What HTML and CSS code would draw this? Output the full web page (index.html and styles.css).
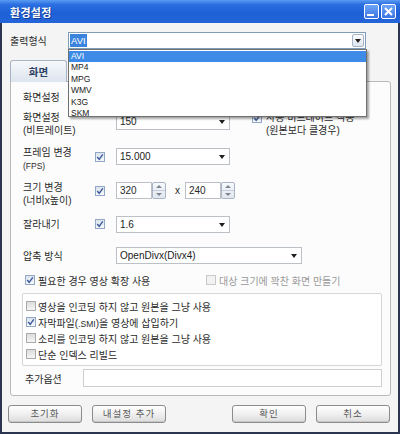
FILE: index.html
```html
<!DOCTYPE html>
<html lang="ko">
<head>
  <meta charset="UTF-8">
  <title>환경설정</title>
  <link rel="stylesheet" href="styles.css">
</head>
<body>
  <div class="window">
    <div class="titlebar">
      <span class="title">환경설정</span>
      <div class="title-buttons">
        <span class="tbtn"><i class="min-bar"></i></span>
        <span class="tbtn">
          <svg width="9" height="9" viewBox="0 0 9 9"><path d="M1 1 L8 8 M8 1 L1 8" stroke="#fff" stroke-width="2"/></svg>
        </span>
      </div>
    </div>

    <div class="body">
      <div class="format-row">
        <span class="format-label">출력형식</span>
        <div class="combo">
          <span class="combo-sel">AVI</span>
          <span class="combo-btn"><i class="arrow"></i></span>
        </div>
      </div>

      <div class="tabs">
        <div class="tab">화면</div>
      </div>

      <div class="panel">
        <div class="section-title">화면설정</div>

        <div class="row r-bitrate">
          <div class="label two">화면설정<br>(비트레이트)</div>
          <div class="check-col"></div>
          <div class="select w114 mt2">150<i class="arrow"></i></div>
          <div class="opt-bitrate">
            <span class="cb on"><svg width="8" height="8" viewBox="0 0 8 8"><path d="M1.2 4 L3.2 6.3 L6.8 1.4" stroke="#3b5a9a" stroke-width="1.4" fill="none"/></svg></span>
            <span class="two">사용 비트레이트 적용<br>(원본보다 클경우)</span>
          </div>
        </div>

        <div class="row r-fps">
          <div class="label two">프레임 변경<br><small>(FPS)</small></div>
          <div class="check-col"><span class="cb on mt6"><svg width="8" height="8" viewBox="0 0 8 8"><path d="M1.2 4 L3.2 6.3 L6.8 1.4" stroke="#3b5a9a" stroke-width="1.4" fill="none"/></svg></span></div>
          <div class="select w114 mt2">15.000<i class="arrow"></i></div>
        </div>

        <div class="row r-size">
          <div class="label two">크기 변경<br>(너비x높이)</div>
          <div class="check-col"><span class="cb on mt5"><svg width="8" height="8" viewBox="0 0 8 8"><path d="M1.2 4 L3.2 6.3 L6.8 1.4" stroke="#3b5a9a" stroke-width="1.4" fill="none"/></svg></span></div>
          <div class="spin-field mt1">
            <div class="input">320</div>
            <div class="spinner"><span><i class="up"></i></span><span><i class="down"></i></span></div>
          </div>
          <span class="times">x</span>
          <div class="spin-field mt1">
            <div class="input">240</div>
            <div class="spinner"><span><i class="up"></i></span><span><i class="down"></i></span></div>
          </div>
        </div>

        <div class="row r-crop">
          <div class="label one">잘라내기</div>
          <div class="check-col"><span class="cb on mt3"><svg width="8" height="8" viewBox="0 0 8 8"><path d="M1.2 4 L3.2 6.3 L6.8 1.4" stroke="#3b5a9a" stroke-width="1.4" fill="none"/></svg></span></div>
          <div class="select w114">1.6<i class="arrow"></i></div>
        </div>

        <div class="row r-codec">
          <div class="label one mt1">압축 방식</div>
          <div class="check-col"></div>
          <div class="select w186">OpenDivx(Divx4)<i class="arrow"></i></div>
        </div>

        <div class="row r-expand">
          <div class="chk-item first">
            <span class="cb on"><svg width="8" height="8" viewBox="0 0 8 8"><path d="M1.2 4 L3.2 6.3 L6.8 1.4" stroke="#3b5a9a" stroke-width="1.4" fill="none"/></svg></span>
            <span>필요한 경우 영상 확장 사용</span>
          </div>
          <div class="chk-item disabled">
            <span class="cb dis"></span>
            <span>대상 크기에 꽉찬 화면 만들기</span>
          </div>
        </div>

        <div class="group">
          <div class="g-row"><span class="cb off"></span><span>영상을 인코딩 하지 않고 원본을 그냥 사용</span></div>
          <div class="g-row"><span class="cb on"><svg width="8" height="8" viewBox="0 0 8 8"><path d="M1.2 4 L3.2 6.3 L6.8 1.4" stroke="#3b5a9a" stroke-width="1.4" fill="none"/></svg></span><span>자막파일(<small>.SMI</small>)을 영상에 삽입하기</span></div>
          <div class="g-row"><span class="cb off"></span><span>소리를 인코딩 하지 않고 원본을 그냥 사용</span></div>
          <div class="g-row"><span class="cb off"></span><span>단순 인덱스 리빌드</span></div>
        </div>

        <div class="row r-extra">
          <div class="extra-label">추가옵션</div>
          <div class="extra-input"></div>
        </div>
      </div>

      <div class="buttons">
        <div class="btn-group">
          <div class="btn">초기화</div>
          <div class="btn">내설정 추가</div>
        </div>
        <div class="btn-group">
          <div class="btn">확인</div>
          <div class="btn">취소</div>
        </div>
      </div>
    </div>

    <ul class="droplist">
      <li class="active">AVI</li>
      <li>MP4</li>
      <li>MPG</li>
      <li>WMV</li>
      <li>K3G</li>
      <li>SKM</li>
    </ul>
  </div>
</body>
</html>
```

FILE: styles.css
```css
/* Base */
* {
  margin: 0;
  padding: 0;
  box-sizing: border-box;
}

body {
  width: 400px;
  height: 434px;
  overflow: hidden;
  background: #fff;
  font-family: "Liberation Sans", "Noto Sans CJK KR", sans-serif;
  font-size: 10px;
  color: #2a2a2a;
}

.window {
  position: relative;
  width: 400px;
  height: 434px;
  display: flex;
  flex-direction: column;
}

/* Title bar */
.titlebar {
  height: 23px;
  display: flex;
  align-items: center;
  justify-content: space-between;
  padding: 0 4px 0 10px;
  background: linear-gradient(#5a9bf2, #2a6ee0 20%, #1d5fd6 60%, #2466d8);
}

.title {
  color: #fff;
  font-weight: bold;
  font-size: 11px;
  letter-spacing: 0.3px;
  text-shadow: 1px 1px 0 rgba(0, 0, 40, 0.4);
}

.title-buttons {
  display: flex;
  gap: 2px;
}

.tbtn {
  width: 15px;
  height: 15px;
  border: 1px solid #fff;
  border-radius: 2px;
  background: linear-gradient(#6fa4f6, #3a76e4);
  display: flex;
  align-items: center;
  justify-content: center;
}

.min-bar {
  display: block;
  width: 7px;
  height: 2px;
  background: #fff;
  margin-top: 6px;
  margin-right: 2px;
}

/* Dialog body */
.body {
  flex: 1;
  border: 2px solid #2b3550;
  border-top: none;
  background: #f4f4f4;
}

.format-row {
  display: flex;
  align-items: center;
  margin-top: 9px;
  padding-left: 8px;
}

.format-label {
  width: 58px;
  font-size: 10px;
}

.combo {
  width: 298px;
  height: 17px;
  border: 1px solid #7f9db9;
  background: #fff;
  display: flex;
  align-items: center;
  padding-left: 1px;
}

.combo-sel {
  background: #3a84de;
  color: #fff;
  padding: 0 1px;
  line-height: 13px;
  font-size: 9.5px;
}

.combo-btn {
  margin-left: auto;
  margin-right: 1px;
  width: 12px;
  height: 13px;
  border: 1px solid #a7b4c6;
  border-radius: 2px;
  background: linear-gradient(#fbfcfe, #dfe5ee);
  display: flex;
  align-items: center;
  justify-content: center;
}

.arrow {
  display: block;
  border-left: 3px solid transparent;
  border-right: 3px solid transparent;
  border-top: 4px solid #1f1f1f;
}

/* Tab */
.tabs {
  margin-top: 11px;
  padding-left: 8px;
  display: flex;
}

.tab {
  width: 57px;
  height: 22px;
  margin-bottom: -1px;
  position: relative;
  border: 1px solid #a9b5c5;
  border-bottom: none;
  border-radius: 3px 3px 0 0;
  background: linear-gradient(#f6f8fb, #dce4ee);
  text-align: center;
  line-height: 22px;
  font-weight: bold;
  font-size: 10.5px;
  color: #2d3f63;
}

.panel {
  margin-left: 8px;
  width: 381px;
  height: 315px;
  border: 1px solid #b9b9b9;
  border-radius: 0 3px 3px 3px;
  background: #fcfcfc;
  padding: 9px 0 0 12px;
}

.section-title {
  height: 20px;
  line-height: 13px;
}

.row {
  display: flex;
  align-items: flex-start;
}

.r-bitrate { height: 35px; }
.r-fps { height: 35px; }
.r-size { height: 35px; }
.r-crop { height: 31px; }
.r-codec { height: 24px; }
.r-expand { height: 18px; align-items: center; }

.label {
  width: 72px;
}

.label.two,
.two {
  line-height: 13px;
}

.label.one {
  line-height: 17px;
}

.label small {
  font-size: 8.5px;
}

.check-col {
  width: 21px;
}

.mt1 { margin-top: 1px; }
.mt2 { margin-top: 2px; }
.mt3 { margin-top: 3px; }
.mt5 { margin-top: 5px; }
.mt6 { margin-top: 6px; }

/* Checkboxes */
.cb {
  width: 10px;
  height: 10px;
  flex: none;
  border: 1px solid #93a7c6;
  background: linear-gradient(#dbe3ee, #f7f9fc);
  display: flex;
  align-items: center;
  justify-content: center;
}

.cb.off {
  border-color: #ababab;
  background: linear-gradient(#dcdcdc, #f6f6f6);
}

.cb.dis {
  border-color: #c9c9c9;
  background: #f2f2f2;
}

/* Select / inputs */
.select {
  height: 17px;
  border: 1px solid #bcc1c8;
  background: #fff;
  display: flex;
  align-items: center;
  padding-left: 3px;
  font-size: 10px;
  color: #222;
}

.select .arrow {
  margin-left: auto;
  margin-right: 4px;
}

.w114 { width: 114px; }
.w186 { width: 186px; }

.opt-bitrate {
  margin-left: 22px;
  display: flex;
  align-items: flex-start;
  gap: 4px;
}

.opt-bitrate .cb {
  margin-top: 2px;
}

.spin-field {
  display: flex;
  height: 17px;
}

.input {
  width: 36px;
  height: 17px;
  border: 1px solid #bcc1c8;
  background: #fff;
  padding-left: 3px;
  line-height: 15px;
}

.spinner {
  width: 14px;
  height: 17px;
  border: 1px solid #a9b5c6;
  border-radius: 2px;
  background: linear-gradient(#f7f9fc, #e1e7ef);
  display: flex;
  flex-direction: column;
}

.spinner span {
  flex: 1;
  display: flex;
  align-items: center;
  justify-content: center;
}

.spinner span + span {
  border-top: 1px solid #c3ccd8;
}

.up {
  border-left: 3px solid transparent;
  border-right: 3px solid transparent;
  border-bottom: 3px solid #7c8592;
}

.down {
  border-left: 3px solid transparent;
  border-right: 3px solid transparent;
  border-top: 3px solid #7c8592;
}

.times {
  margin: 0 5px 0 9px;
  line-height: 19px;
}

.chk-item {
  flex: none;
  display: flex;
  align-items: center;
  gap: 3px;
  white-space: nowrap;
}

.chk-item.first {
  width: 181px;
  margin-left: 2px;
}

.chk-item.disabled {
  color: #9a9a9a;
}

/* Group box */
.group {
  margin: 4px 0 0 -1px;
  width: 360px;
  height: 73px;
  border: 1px solid #d6d6d6;
  border-radius: 2px;
  background: #fff;
  padding: 4px 0 0 3px;
}

.g-row {
  height: 16px;
  display: flex;
  align-items: center;
  gap: 2px;
  white-space: nowrap;
}

.g-row small {
  font-size: 8.5px;
}

.r-extra {
  margin-top: 2px;
  height: 20px;
  align-items: center;
}

.extra-label {
  width: 58px;
  margin-left: 2px;
}

.extra-input {
  width: 299px;
  height: 18px;
  border: 1px solid #cfcfcf;
  background: #fff;
}

/* Buttons */
.buttons {
  margin-top: 9px;
  padding: 0 8px 0 6px;
  display: flex;
  justify-content: space-between;
}

.btn-group {
  display: flex;
  gap: 10px;
}

.btn {
  width: 74px;
  height: 18px;
  border: 1px solid #8c8c8c;
  border-radius: 3px;
  background: linear-gradient(#ffffff, #eeeeee 55%, #dcdcdc);
  box-shadow: inset 0 -1px 0 #c8c8c8;
  text-align: center;
  line-height: 16px;
  font-size: 9.5px;
  letter-spacing: 1px;
  color: #5a5a5a;
}

/* Open dropdown list */
.droplist {
  position: absolute;
  left: 68px;
  top: 49px;
  width: 299px;
  height: 68px;
  list-style: none;
  background: #fff;
  border: 1px solid #6f6f6f;
  box-shadow: 2px 2px 2px rgba(0, 0, 0, 0.35);
  padding-top: 1px;
  font-size: 8.5px;
  color: #222;
}

.droplist li {
  height: 11.4px;
  line-height: 11.4px;
  padding-left: 2px;
}

.droplist li.active {
  background: #3d8be6;
  color: #fff;
}
```
